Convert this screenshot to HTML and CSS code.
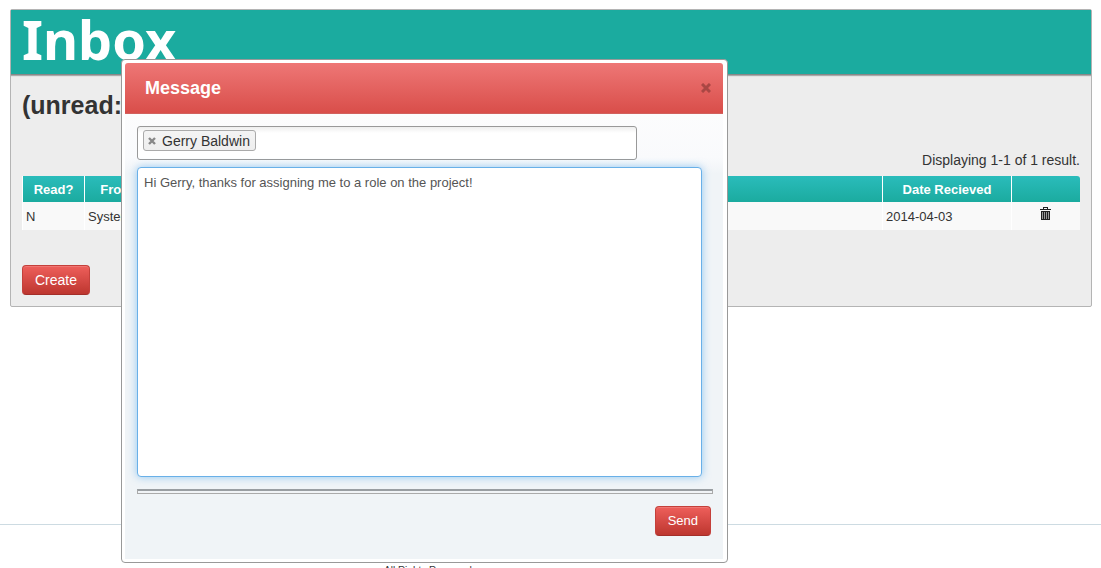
FILE: index.html
```
<!DOCTYPE html>
<html lang="en">
<head>
<meta charset="utf-8">
<title>Inbox</title>
<link rel="stylesheet" href="styles.css">
</head>
<body>
<main class="panel">
  <h1 class="panel-title">Inbox</h1>
  <div class="panel-body">
    <h2 class="unread">(unread: 1)</h2>
    <p class="summary">Displaying 1-1 of 1 result.</p>
    <table class="mail">
      <colgroup><col class="col-read"><col class="col-from"><col><col class="col-date"><col class="col-action"></colgroup>
      <thead><tr><th>Read?</th><th>From</th><th></th><th>Date Recieved</th><th></th></tr></thead>
      <tbody><tr>
        <td>N</td><td>System</td><td></td><td>2014-04-03</td>
        <td class="action"><button class="icon-button" type="button" aria-label="Delete">
          <svg width="11" height="13" viewBox="0 0 11 13" shape-rendering="crispEdges"><path fill="#222" d="M3 0h5v2h3v1H0V2h3zM1 4h9v9H1z"/><path fill="#f9f9f9" d="M4 1h3v1H4z"/><path fill="#999" d="M2 5h1v7H2zM4 5h1v7H4zM6 5h1v7H6zM8 5h1v7H8z"/></svg>
        </button></td>
      </tr></tbody>
    </table>
    <button class="btn" type="button">Create</button>
  </div>
</main>
<footer class="footer">All Rights Reserved.</footer>

<section class="dialog" role="dialog" aria-labelledby="dialog-title">
  <header class="dialog-header">
    <h3 class="dialog-title" id="dialog-title">Message</h3>
    <button class="close" type="button" aria-label="Close">
      <svg width="10" height="10" viewBox="0 0 10 10"><path fill="none" stroke="#a94744" stroke-width="3" d="M1 1l8 8M9 1l-8 8"/></svg>
    </button>
  </header>
  <form class="dialog-body">
    <div class="recipients">
      <span class="token"><button class="token-remove" type="button" aria-label="Remove Gerry Baldwin"><svg width="8" height="8" viewBox="0 0 8 8"><path fill="none" stroke="#888" stroke-width="2.4" d="M1 1l6 6M7 1l-6 6"/></svg></button>Gerry Baldwin</span>
      <input class="recipient-input" type="text" aria-label="Recipients">
    </div>
    <textarea class="message" aria-label="Message text">Hi Gerry, thanks for assigning me to a role on the project!</textarea>
    <hr class="rule">
    <div class="actions"><button class="btn btn-send" type="button">Send</button></div>
  </form>
</section>
</body>
</html>
```
FILE: styles.css
```
* { box-sizing: border-box; }
html { height: 100%; }
body {
  margin: 0;
  height: 100%;
  overflow: hidden;
  position: relative;
  background: #fff;
  color: #333;
  font: 14px/20px "Liberation Sans", Arial, sans-serif;
}
h1, h2, h3, p { margin: 0; }
button, input, textarea { font-family: inherit; }

.panel {
  margin: 9px 9px 0 10px;
  border: 1px solid #b4b4b4;
  border-radius: 2px;
  background: #ededed;
}
.panel-title {
  padding: 0 11px 6px;
  background: #1bab9f;
  border-bottom: 1px solid #888;
  box-shadow: 0 1px 1px #aaa;
  color: #fff;
  font: bold 54px/58px "Noto Sans", Verdana, sans-serif;
}
.panel-body { padding: 10px 11px 11px; }
.unread { font-size: 25px; line-height: 40px; }
.summary { margin-top: 25px; text-align: right; }
.mail {
  width: 100%;
  margin: 6px 0 35px;
  table-layout: fixed;
  border-collapse: separate;
  border-spacing: 0;
  font-size: 13px;
}
.col-read { width: 62px; }
.col-from { width: 64px; }
.col-date { width: 129px; }
.col-action { width: 69px; }
.mail th {
  height: 26px;
  padding: 4px 3px 2px;
  border-left: 1px solid #fff;
  background: linear-gradient(#2abcbb, #1bab9f);
  color: #fff;
}
.mail th:last-child { border-top-right-radius: 3px; }
.mail td {
  height: 28px;
  padding: 5px 3px 3px;
  border-left: 1px solid #fff;
  background: #f9f9f9;
}
.mail .action { text-align: center; line-height: 0; padding: 0 5px 6px 3px; }
.icon-button, .close, .token-remove {
  padding: 0;
  border: 0;
  background: none;
  line-height: 0;
}
.btn {
  height: 30px;
  padding: 0 12px;
  border: 1px solid #c4403b;
  border-bottom-color: #a32e29;
  border-radius: 4px;
  background: linear-gradient(#ee5f5b, #bd362f);
  box-shadow: inset 0 1px 0 rgba(255, 255, 255, .15);
  color: #fff;
  font-size: 14px;
  line-height: 20px;
}
.btn-send { font-size: 13px; }
.panel-body .btn { display: block; }
.footer {
  margin-top: 217px;
  padding: 40px 0 0 384px;
  border-top: 1px solid #cddbe2;
  font-size: 10px;
  line-height: 12px;
}

.dialog {
  position: absolute;
  top: 59px;
  left: 121px;
  width: 607px;
  padding: 3px 4px 3px 3px;
  border: 1px solid #999;
  border-radius: 4px;
  background: #fff;
}
.dialog-header {
  display: flex;
  align-items: center;
  justify-content: space-between;
  height: 51px;
  padding: 0 12px 0 20px;
  border-bottom: 1px solid #d1615d;
  border-radius: 3px 3px 0 0;
  background: linear-gradient(#ee7776, #d94e4a);
}
.dialog-title { color: #fff; font-size: 18px; line-height: 24px; }
.dialog-body {
  padding: 12px 10px 23px 12px;
  background: linear-gradient(#fcfcfd, #f9fafc 44px, #f0f4f7 60px);
}
.recipients {
  display: flex;
  align-items: flex-start;
  width: 500px;
  height: 34px;
  padding: 3px 5px;
  border: 1px solid #999;
  border-radius: 3px;
  background: linear-gradient(#eee, #fff 6px);
}
.token {
  display: flex;
  align-items: center;
  gap: 6px;
  height: 21px;
  padding: 0 5px 0 4px;
  border: 1px solid #aaa;
  border-radius: 3px;
  background: linear-gradient(#f4f4f4, #eee);
  line-height: 18px;
}
.recipient-input {
  flex: 1;
  min-width: 0;
  height: 24px;
  border: 0;
  background: none;
  outline: none;
}
.message {
  display: block;
  width: 565px;
  height: 310px;
  margin: 7px 0 12px;
  padding: 5px 6px;
  border: 1px solid #69b0e8;
  border-radius: 4px;
  background: #fff;
  box-shadow: 0 0 8px rgba(82, 168, 236, .6);
  color: #555;
  font-size: 13px;
  line-height: 20px;
  outline: none;
  resize: none;
}
.rule {
  height: 5px;
  margin: 0 0 12px;
  border: 1px solid #aaa;
  border-top: 2px solid #999ea2;
  background: #f0f3f6;
}
.actions { display: flex; justify-content: flex-end; padding-right: 2px; }
```
